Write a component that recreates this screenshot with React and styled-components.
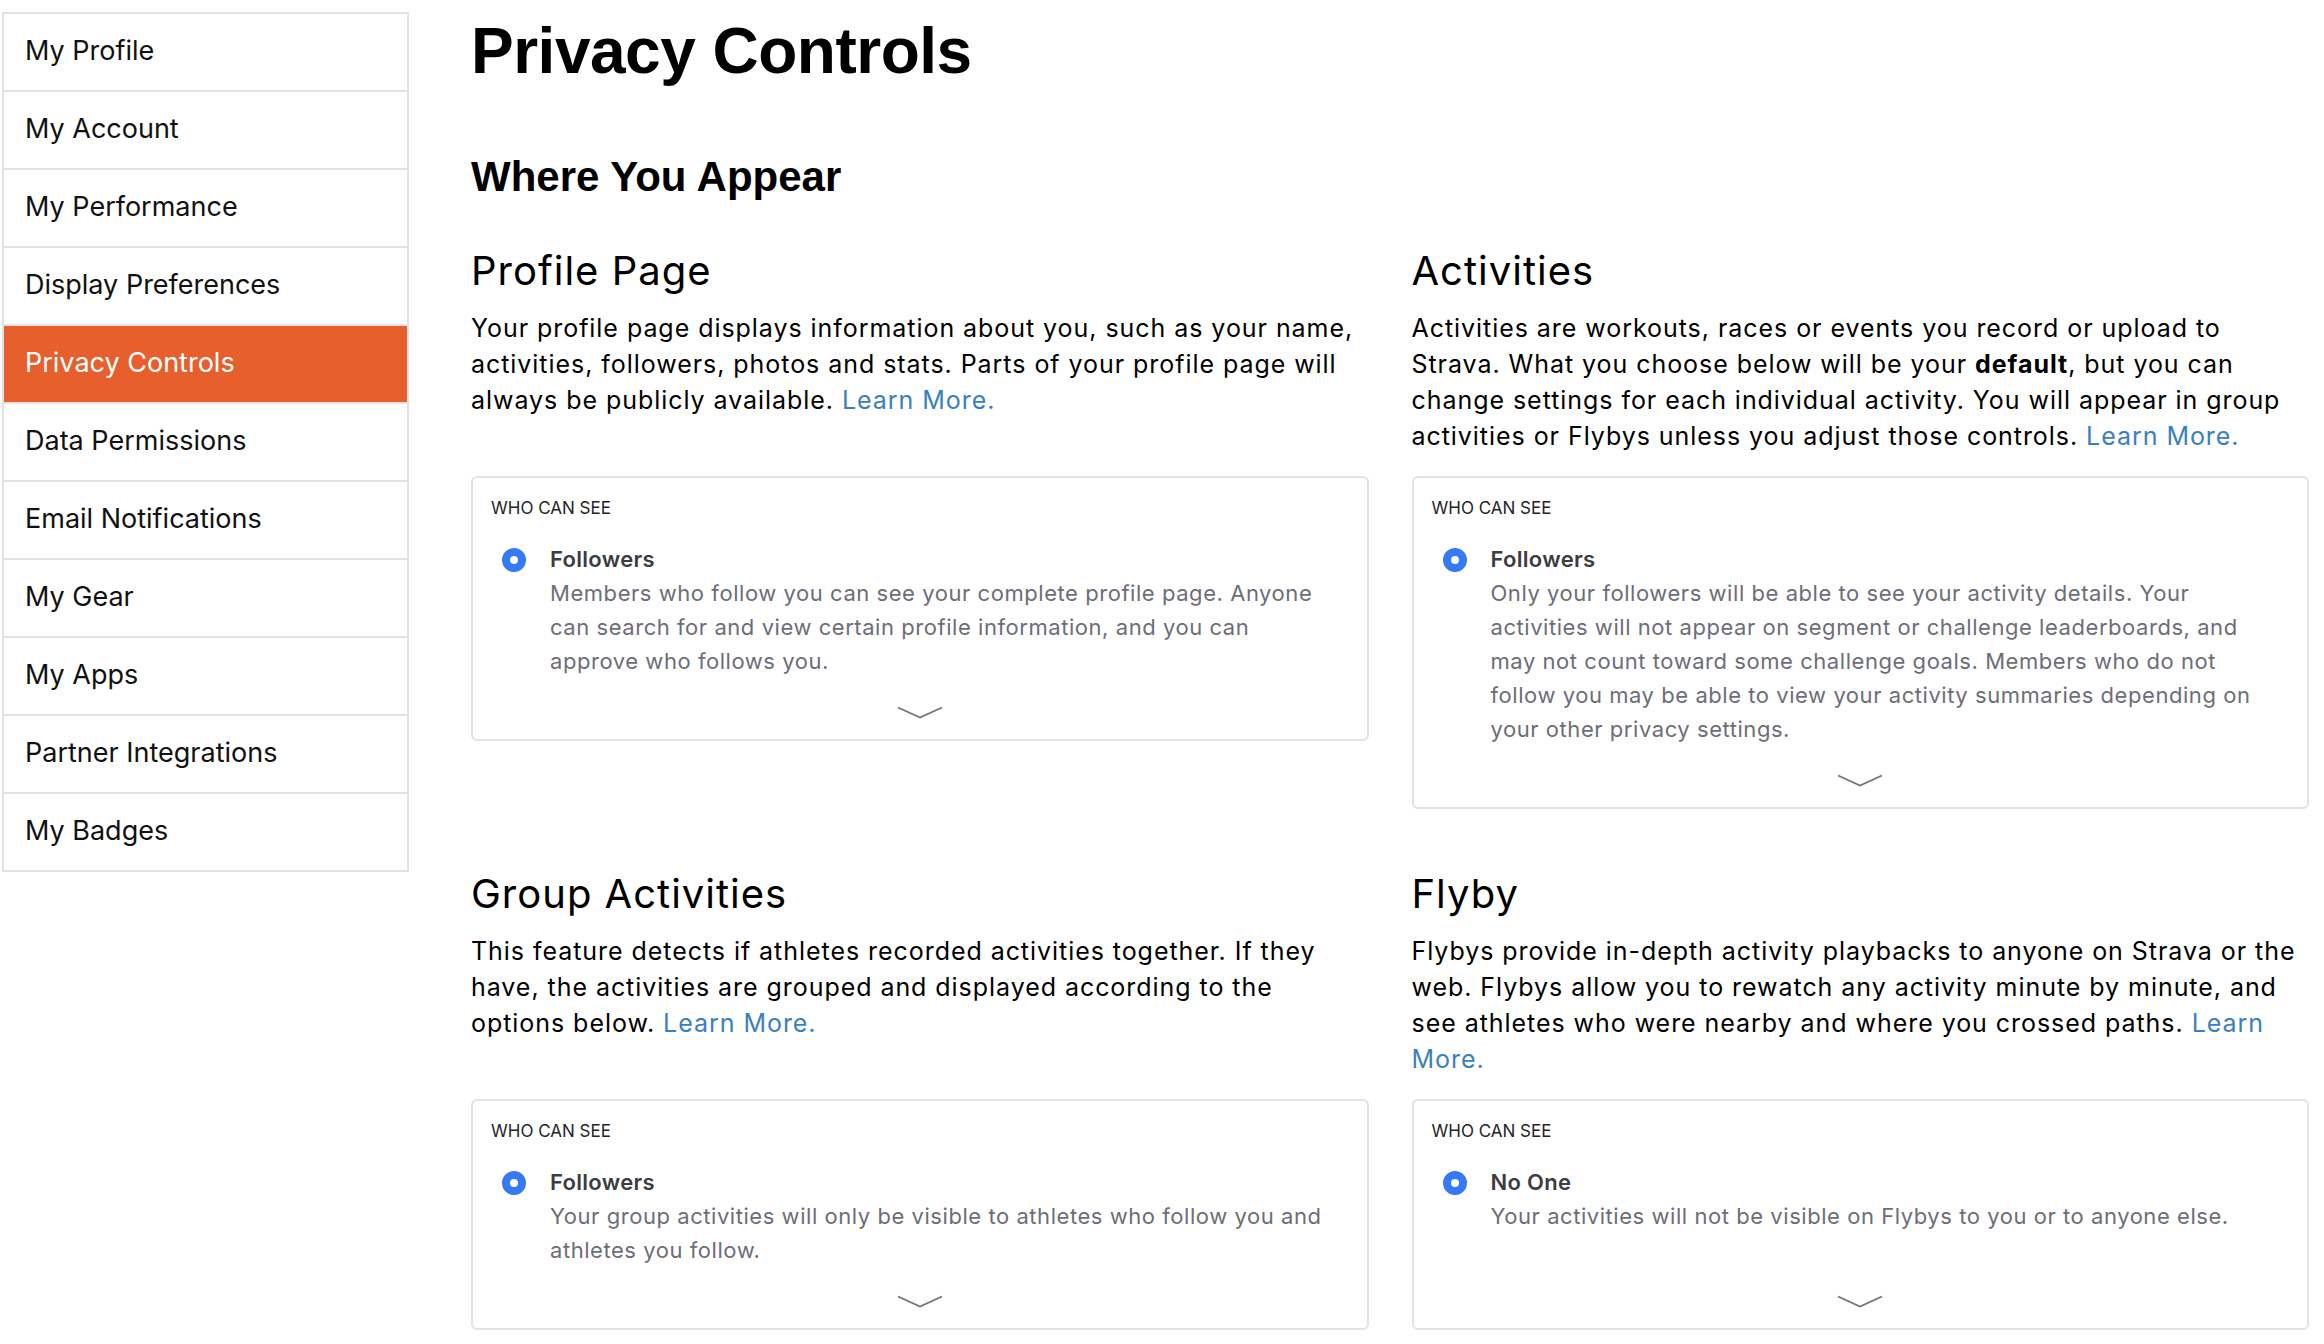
import React from 'react';
import styled, { createGlobalStyle } from 'styled-components';

const navItems = [
  'My Profile',
  'My Account',
  'My Performance',
  'Display Preferences',
  'Privacy Controls',
  'Data Permissions',
  'Email Notifications',
  'My Gear',
  'My Apps',
  'Partner Integrations',
  'My Badges',
];

const GlobalStyle = createGlobalStyle`
  * {
    box-sizing: border-box;
  }

  body {
    margin: 0;
    background: #ffffff;
    color: #000000;
    font-family: Inter, 'Noto Sans', sans-serif;
  }
`;

const Chevron = () => (
  <svg width='46' height='13' viewBox='0 0 46 13' fill='none'>
    <polyline points='1,1.5 23,11.5 45,1.5' stroke='#74747d' strokeWidth='1.9' />
  </svg>
);

const Visibility = ({ option, children }) => (
  <Card>
    <CardLabel>Who can see</CardLabel>
    <Option>
      <Radio />
      <OptionText>
        <OptionTitle>{option}</OptionTitle>
        <OptionDesc>{children}</OptionDesc>
      </OptionText>
    </Option>
    <Expand>
      <Chevron />
    </Expand>
  </Card>
);

const App = () => {
  return (
    <>
      <GlobalStyle />
      <Page>
        <Sidebar>
          {navItems.map((item) => (
            <NavItem key={item} $active={item === 'Privacy Controls'}>
              {item}
            </NavItem>
          ))}
        </Sidebar>

        <Main>
          <Title>Privacy Controls</Title>
          <SectionTitle>Where You Appear</SectionTitle>

          <SettingsGrid $align='start'>
            <Intro>
              <h2>Profile Page</h2>
              <p>
                Your profile page displays information about you, such as your
                name, activities, followers, photos and stats. Parts of your
                profile page will always be publicly available.{' '}
                <a href='#'>Learn More.</a>
              </p>
            </Intro>
            <Intro>
              <h2>Activities</h2>
              <p>
                Activities are workouts, races or events you record or upload to
                Strava. What you choose below will be your <b>default</b>, but
                you can change settings for each individual activity. You will
                appear in group activities or Flybys unless you adjust those
                controls. <a href='#'>Learn More.</a>
              </p>
            </Intro>
            <Visibility option='Followers'>
              Members who follow you can see your complete profile page. Anyone
              can search for and view certain profile information, and you can
              approve who follows you.
            </Visibility>
            <Visibility option='Followers'>
              Only your followers will be able to see your activity details.
              Your activities will not appear on segment or challenge
              leaderboards, and may not count toward some challenge goals.
              Members who do not follow you may be able to view your activity
              summaries depending on your other privacy settings.
            </Visibility>
          </SettingsGrid>

          <SettingsGrid $align='stretch' $spaced>
            <Intro>
              <h2>Group Activities</h2>
              <p>
                This feature detects if athletes recorded activities together. If
                they have, the activities are grouped and displayed according to
                the options below. <a href='#'>Learn More.</a>
              </p>
            </Intro>
            <Intro>
              <h2>Flyby</h2>
              <p>
                Flybys provide in-depth activity playbacks to anyone on Strava or
                the web. Flybys allow you to rewatch any activity minute by
                minute, and see athletes who were nearby and where you crossed
                paths. <a href='#'>Learn More.</a>
              </p>
            </Intro>
            <Visibility option='Followers'>
              Your group activities will only be visible to athletes who follow
              you and athletes you follow.
            </Visibility>
            <Visibility option='No One'>
              Your activities will not be visible on Flybys to you or to anyone
              else.
            </Visibility>
          </SettingsGrid>
        </Main>
      </Page>
    </>
  );
};

const Page = styled.div`
  display: flex;
  align-items: flex-start;
  padding: 12px 15px 0 2px;
`;

const Sidebar = styled.ul`
  flex: 0 0 407px;
  margin: 0;
  padding: 0;
  list-style: none;
  border: 2px solid #e1e1e8;
`;

const NavItem = styled.li`
  display: flex;
  align-items: center;
  height: 78px;
  padding: 0 0 4px 21px;
  border-top: 2px solid #e1e1e8;
  font-size: 27px;
  color: ${(p) => (p.$active ? '#ffffff' : '#111111')};
  background: ${(p) => (p.$active ? '#e65f2c' : '#ffffff')};

  &:first-child {
    height: 76px;
    border-top: none;
  }
`;

const Main = styled.main`
  flex: 1;
  margin-left: 62px;
`;

const Title = styled.h1`
  margin: 5px 0 0;
  font-family: 'Liberation Sans', Arial, sans-serif;
  font-weight: 700;
  font-size: 64px;
  line-height: 68px;
  letter-spacing: -0.5px;
`;

const SectionTitle = styled.h2`
  margin: 68px 0 0;
  font-family: 'Liberation Sans', Arial, sans-serif;
  font-weight: 700;
  font-size: 42px;
  line-height: 48px;
`;

const SettingsGrid = styled.div`
  display: grid;
  grid-template-columns: 1fr 1fr;
  column-gap: 43px;
  row-gap: 22px;
  align-items: ${(p) => p.$align};
  margin-top: ${(p) => (p.$spaced ? '62px' : '47px')};
`;

const Intro = styled.div`
  align-self: stretch;

  h2 {
    margin: 0;
    font-weight: 400;
    font-size: 40px;
    line-height: 46px;
    letter-spacing: 1px;
    color: #000000;
  }

  p {
    margin: 16px 0 0;
    font-size: 25px;
    line-height: 36px;
    letter-spacing: 0.95px;
    color: #000000;
  }

  b {
    font-weight: 700;
  }

  a {
    color: #3a80be;
    text-decoration: none;
  }
`;

const Card = styled.div`
  display: flex;
  flex-direction: column;
  padding: 18px 30px 20px 18px;
  border: 2px solid #e1e1e8;
  border-radius: 6px;
  background: #ffffff;
`;

const CardLabel = styled.div`
  font-size: 17px;
  line-height: 24px;
  text-transform: uppercase;
  color: #242428;
`;

const Option = styled.div`
  display: flex;
  align-items: flex-start;
  margin-top: 24px;
  padding-left: 11px;
`;

const Radio = styled.span`
  flex: 0 0 24px;
  width: 24px;
  height: 24px;
  margin-top: 4px;
  border: 8px solid #3579f3;
  border-radius: 50%;
  background: #ffffff;
`;

const OptionText = styled.div`
  margin-left: 24px;
`;

const OptionTitle = styled.div`
  font-size: 22px;
  font-weight: 600;
  line-height: 30px;
  letter-spacing: 0.3px;
  color: #3c3c43;
`;

const OptionDesc = styled.div`
  margin-top: 2px;
  font-size: 22px;
  line-height: 34px;
  letter-spacing: 0.55px;
  color: #6d6d78;
`;

const Expand = styled.div`
  display: flex;
  justify-content: center;
  margin-top: auto;
  padding-top: 28px;
  padding-left: 12px;
`;

export default App;
